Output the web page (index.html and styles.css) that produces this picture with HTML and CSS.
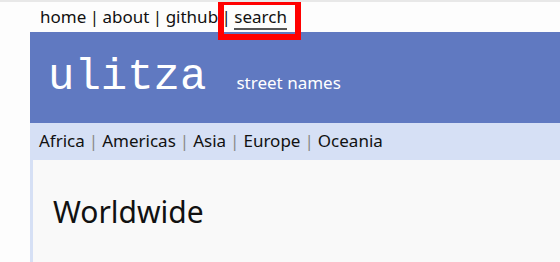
FILE: index.html
```html
<!DOCTYPE html>
<html lang="en">
<head>
    <meta charset="UTF-8">
    <meta name="viewport" content="width=device-width, initial-scale=1.0">
    <title>ulitza</title>
    <link rel="stylesheet" href="styles.css">
</head>
<body>
    <nav class="top-nav">
        <a href="#">home</a> | <a href="#">about</a> | <a href="#">github</a> | <a href="#" class="current">search</a>
    </nav>

    <header class="site-header">
        <span class="logo">ulitza</span>
        <span class="tagline">street names</span>
    </header>

    <nav class="regions">
        <a href="#">Africa</a><span class="sep">|</span><a href="#">Americas</a><span class="sep">|</span><a href="#">Asia</a><span class="sep">|</span><a href="#">Europe</a><span class="sep">|</span><a href="#">Oceania</a>
    </nav>

    <main class="content">
        <h1>Worldwide</h1>
    </main>
</body>
</html>
```

FILE: styles.css
```css
body {
    font-family: "Noto Sans", "Open Sans", sans-serif;
    margin: 0;
    padding-left: 30px;
    background-color: #fdfdfd;
    border-top: 2px solid #e8e8e8;
    color: #111;
}
a {
    color: #111;
    text-decoration: none;
}
.top-nav {
    height: 30px;
    padding-left: 10px;
    font-size: 17px;
    line-height: 30px;
    word-spacing: -1px;
}
.top-nav .current {
    position: relative;
    border-bottom: 2px solid #555;
}
.top-nav .current::after {
    content: "";
    position: absolute;
    left: -16px;
    right: -14px;
    top: -6px;
    bottom: -12px;
    border: 6px solid #f00;
}
.site-header {
    display: flex;
    align-items: baseline;
    height: 91px;
    box-sizing: border-box;
    padding: 20px 0 0 18px;
    background-color: #6079c1;
    color: #fff;
}
.logo {
    font-family: "Liberation Mono", monospace;
    font-size: 44px;
    margin-right: 30px;
}
.tagline {
    font-size: 17px;
}
.regions {
    height: 37px;
    padding-left: 9px;
    background-color: #d6e0f5;
    font-size: 17px;
    line-height: 36px;
}
.regions .sep {
    color: #888;
    margin: 0 4px;
}
.content {
    height: 102px;
    padding: 1px 0 0 20px;
    background-color: #f9f9f9;
    border-left: 3px solid #d6e0f5;
}
.content h1 {
    margin: 30px 0 0;
    font-size: 30px;
    font-weight: normal;
}
```
